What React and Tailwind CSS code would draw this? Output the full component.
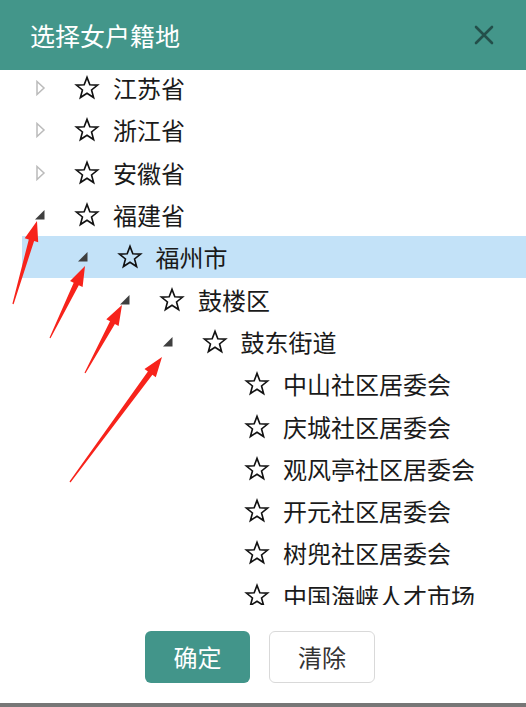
const rows = [
  { level: 0, label: "江苏省", state: "closed" },
  { level: 0, label: "浙江省", state: "closed" },
  { level: 0, label: "安徽省", state: "closed" },
  { level: 0, label: "福建省", state: "open" },
  { level: 1, label: "福州市", state: "open", selected: true },
  { level: 2, label: "鼓楼区", state: "open" },
  { level: 3, label: "鼓东街道", state: "open" },
  { level: 4, label: "中山社区居委会" },
  { level: 4, label: "庆城社区居委会" },
  { level: 4, label: "观风亭社区居委会" },
  { level: 4, label: "开元社区居委会" },
  { level: 4, label: "树兜社区居委会" },
  { level: 4, label: "中国海峡人才市场" },
];

const arrows = [
  [13, 304, 37, 221],
  [50, 338, 85, 266],
  [85, 373, 122, 305],
  [70, 482, 162, 357],
];

function Star() {
  return (
    <svg width="26" height="26" viewBox="0 0 24 24" className="shrink-0">
      <polygon
        points="12,2.2 14.6,9 21.8,9.3 16.2,13.8 18.1,20.8 12,16.8 5.9,20.8 7.8,13.8 2.2,9.3 9.4,9"
        fill="none"
        stroke="#111"
        strokeWidth="1.5"
        strokeLinejoin="miter"
      />
    </svg>
  );
}

function Toggle({ state }) {
  if (state === "closed") {
    return (
      <svg width="16" height="16" viewBox="0 0 16 16">
        <polygon points="5,1.5 12,8 5,14.5" fill="#fff" stroke="#bbb" strokeWidth="1.5" />
      </svg>
    );
  }
  if (state === "open") {
    return (
      <svg width="16" height="16" viewBox="0 0 16 16">
        <polygon points="3,12.5 12.5,12.5 12.5,3" fill="#3f3f3f" />
      </svg>
    );
  }
  return <span className="w-4" />;
}

function TreeRow({ row }) {
  return (
    <div
      className={
        "flex h-[42.3px] items-center " +
        (row.selected ? "ml-[22px] bg-[#c3e2f8]" : "")
      }
      style={{ paddingLeft: 32 + row.level * 42.5 - (row.selected ? 22 : 0) }}
    >
      <span className="flex w-4 justify-center">
        <Toggle state={row.state} />
      </span>
      <span className="ml-[26px] flex items-center">
        <Star />
      </span>
      <span className="ml-[13px] text-[24px] leading-none text-[#1a1a1a]">{row.label}</span>
    </div>
  );
}

function Arrow({ a }) {
  const [x1, y1, x2, y2] = a;
  const dx = x2 - x1;
  const dy = y2 - y1;
  const len = Math.hypot(dx, dy);
  const ux = dx / len;
  const uy = dy / len;
  const nx = -uy;
  const ny = ux;
  const bx = x2 - ux * 20;
  const by = y2 - uy * 20;
  const p = (x, y) => `${x.toFixed(1)},${y.toFixed(1)}`;
  const pts = [
    p(x1 + nx * 0.6, y1 + ny * 0.6),
    p(bx + nx * 2.8, by + ny * 2.8),
    p(bx + nx * 7, by + ny * 7),
    p(x2, y2),
    p(bx - nx * 7, by - ny * 7),
    p(bx - nx * 2.8, by - ny * 2.8),
    p(x1 - nx * 0.6, y1 - ny * 0.6),
  ].join(" ");
  return <polygon points={pts} fill="#f7231b" />;
}

export default function App() {
  return (
    <div
      className="relative flex h-[707px] w-[526px] flex-col overflow-hidden bg-white"
      style={{ fontFamily: '"Noto Sans CJK SC", "Noto Sans", sans-serif' }}
    >
      <div className="flex h-[70px] shrink-0 items-center justify-between bg-[#43968a] pl-[30px] pr-[30px]">
        <span className="text-[25px] leading-none text-white">选择女户籍地</span>
        <svg width="24" height="24" viewBox="0 0 24 24">
          <path d="M4 4 L20 20 M20 4 L4 20" stroke="#234f4a" strokeWidth="2.6" strokeLinecap="round" />
        </svg>
      </div>

      <div className="h-[535px] shrink-0 overflow-hidden">
        <div className="-mt-[3px]">
          {rows.map((row) => (
            <TreeRow key={row.label} row={row} />
          ))}
        </div>
      </div>

      <div className="flex flex-1 justify-center gap-[19px] pr-[6px] pt-[26px]">
        <button className="h-[52px] w-[105px] rounded-md bg-[#42958a] text-[24px] text-white">确定</button>
        <button className="h-[52px] w-[106px] rounded-md border border-[#d9d9d9] bg-white text-[24px] text-[#333]">
          清除
        </button>
      </div>
      <div className="h-[4px] shrink-0 bg-[#777]" />

      <svg className="pointer-events-none absolute left-0 top-0" width="526" height="707">
        {arrows.map((a, i) => (
          <Arrow key={i} a={a} />
        ))}
      </svg>
    </div>
  );
}
